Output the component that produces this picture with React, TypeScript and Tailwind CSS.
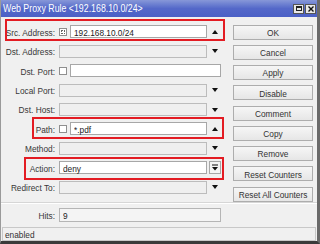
import React from "react";

const T = ({ children }: { children: React.ReactNode }) => (
  <span className="inline-block leading-none scale-y-[1.2] whitespace-nowrap">{children}</span>
);

const Up = () => (
  <svg width="6" height="4" viewBox="0 0 6 4">
    <polygon points="0,4 6,4 3,0" fill="#111" />
  </svg>
);
const Down = () => (
  <svg width="6" height="4" viewBox="0 0 6 4">
    <polygon points="0,0 6,0 3,4" fill="#111" />
  </svg>
);

type Row = {
  label: string;
  check?: "plain" | "dotted";
  kind: "white" | "gray" | "wide" | "combo";
  value?: string;
  arrow?: "up" | "down";
};

const rows: Row[] = [
  { label: "Src. Address:", check: "dotted", kind: "white", value: "192.168.10.0/24", arrow: "up" },
  { label: "Dst. Address:", kind: "gray", arrow: "down" },
  { label: "Dst. Port:", check: "plain", kind: "wide" },
  { label: "Local Port:", kind: "gray", arrow: "down" },
  { label: "Dst. Host:", kind: "gray", arrow: "down" },
  { label: "Path:", check: "plain", kind: "white", value: "*.pdf", arrow: "up" },
  { label: "Method:", kind: "gray", arrow: "down" },
  { label: "Action:", kind: "combo", value: "deny" },
  { label: "Redirect To:", kind: "gray", arrow: "down" },
];

const buttons = [
  "OK",
  "Cancel",
  "Apply",
  "Disable",
  "Comment",
  "Copy",
  "Remove",
  "Reset Counters",
  "Reset All Counters",
];

function FormRow({ r }: { r: Row }) {
  const hasCheck = !!r.check;
  let inputW = hasCheck ? "w-[137px]" : "w-[148px]";
  if (r.kind === "wide") inputW = "w-[151px]";
  const bg = r.kind === "gray" ? "bg-[#efefef] border-[#bcbcbc]" : "bg-white border-[#a7a7a7]";
  return (
    <div className="h-[19.4px] flex items-center">
      <div className="w-[54px] text-right text-[#383838]">
        <T>{r.label}</T>
      </div>
      <div className="ml-[4px] flex items-center">
        {hasCheck && (
          <div className="w-[8px] h-[8px] mr-[3px] border border-[#8f8f8f] bg-white flex items-center justify-center">
            {r.check === "dotted" && <div className="w-[4px] h-[4px] border border-dotted border-[#666]" />}
          </div>
        )}
        <div className={`${inputW} h-[13px] border ${bg} flex items-center pl-[3px] text-[#222]`}>
          {r.value && <T>{r.value}</T>}
        </div>
        {r.arrow && (
          <div className="w-[16px] flex justify-center">{r.arrow === "up" ? <Up /> : <Down />}</div>
        )}
        {r.kind === "combo" && (
          <div className="ml-[2px] w-[12px] h-[13px] border border-[#a7a7a7] bg-[#f5f5f5] flex items-center justify-center">
            <svg width="6" height="7" viewBox="0 0 6 7">
              <rect x="0" y="0.5" width="6" height="1" fill="#111" />
              <polygon points="0,3 6,3 3,6.5" fill="#111" />
            </svg>
          </div>
        )}
      </div>
    </div>
  );
}

export default function App() {
  return (
    <div className="w-[320px] h-[244px] relative overflow-hidden bg-[#f0f0f0] font-['Liberation_Sans',Arial,sans-serif] text-[8.3px] text-[#333] border-l border-l-[#9a9a9a] border-r-[3px] border-r-[#6a6a6a] border-b-[3px] border-b-[#3a3a3a] flex flex-col">
      {/* title bar */}
      <div className="h-[17px] shrink-0 bg-gradient-to-b from-[#8797d8] via-[#5468c9] to-[#4b60c6] flex items-center justify-between pl-[2px] pr-[1px]">
        <span className="text-white text-[8.8px]">
          <T>Web Proxy Rule &lt;192.168.10.0/24&gt;</T>
        </span>
        <div className="flex gap-[1px]">
          <div className="w-[11px] h-[10px] bg-[#e8e8e8] border border-[#555] flex items-center justify-center">
            <div className="w-[6px] h-[5px] border border-[#222] border-t-2" />
          </div>
          <div className="w-[11px] h-[10px] bg-[#e8e8e8] border border-[#555] flex items-center justify-center">
            <svg width="6" height="6" viewBox="0 0 6 6">
              <path d="M0.5 0.5 L5.5 5.5 M5.5 0.5 L0.5 5.5" stroke="#111" strokeWidth="1.4" />
            </svg>
          </div>
        </div>
      </div>

      {/* main */}
      <div className="h-[185px] shrink-0 flex">
        <div className="w-[232px] pt-[5.3px]">
          {rows.map((r) => (
            <FormRow key={r.label} r={r} />
          ))}
        </div>
        <div className="w-[80px] pt-[7.5px] flex flex-col gap-[5.25px]">
          {buttons.map((b) => (
            <div
              key={b}
              className="h-[15px] border border-[#adadad] bg-gradient-to-b from-[#f6f6f6] to-[#e6e6e6] flex items-center justify-center text-[#333]"
            >
              <T>{b}</T>
            </div>
          ))}
        </div>
      </div>

      {/* separator */}
      <div className="h-px shrink-0 bg-[#d6d6d6]" />
      <div className="h-px shrink-0 bg-white" />

      {/* hits */}
      <div className="mt-[4px] h-[14px] shrink-0 flex items-center">
        <div className="w-[54px] text-right text-[#383838]">
          <T>Hits:</T>
        </div>
        <div className="ml-[4px] w-[162px] h-[14px] border border-[#b5b5b5] bg-[#f4f4f4] flex items-center pl-[3px] text-[#222]">
          <T>9</T>
        </div>
      </div>

      {/* status bar */}
      <div className="mt-[5px] mx-px h-[14px] shrink-0 border border-[#c8c8c8] flex items-center pl-[2px] text-[#333]">
        <T>enabled</T>
      </div>

      {/* annotation boxes */}
      <div className="absolute left-[4px] top-[19px] w-[220px] h-[22px] border-2 border-[#e31c23]" />
      <div className="absolute left-[31px] top-[117px] w-[192px] h-[22px] border-2 border-[#e31c23]" />
      <div className="absolute left-[23px] top-[157px] w-[200px] h-[23px] border-2 border-[#e31c23]" />
    </div>
  );
}
